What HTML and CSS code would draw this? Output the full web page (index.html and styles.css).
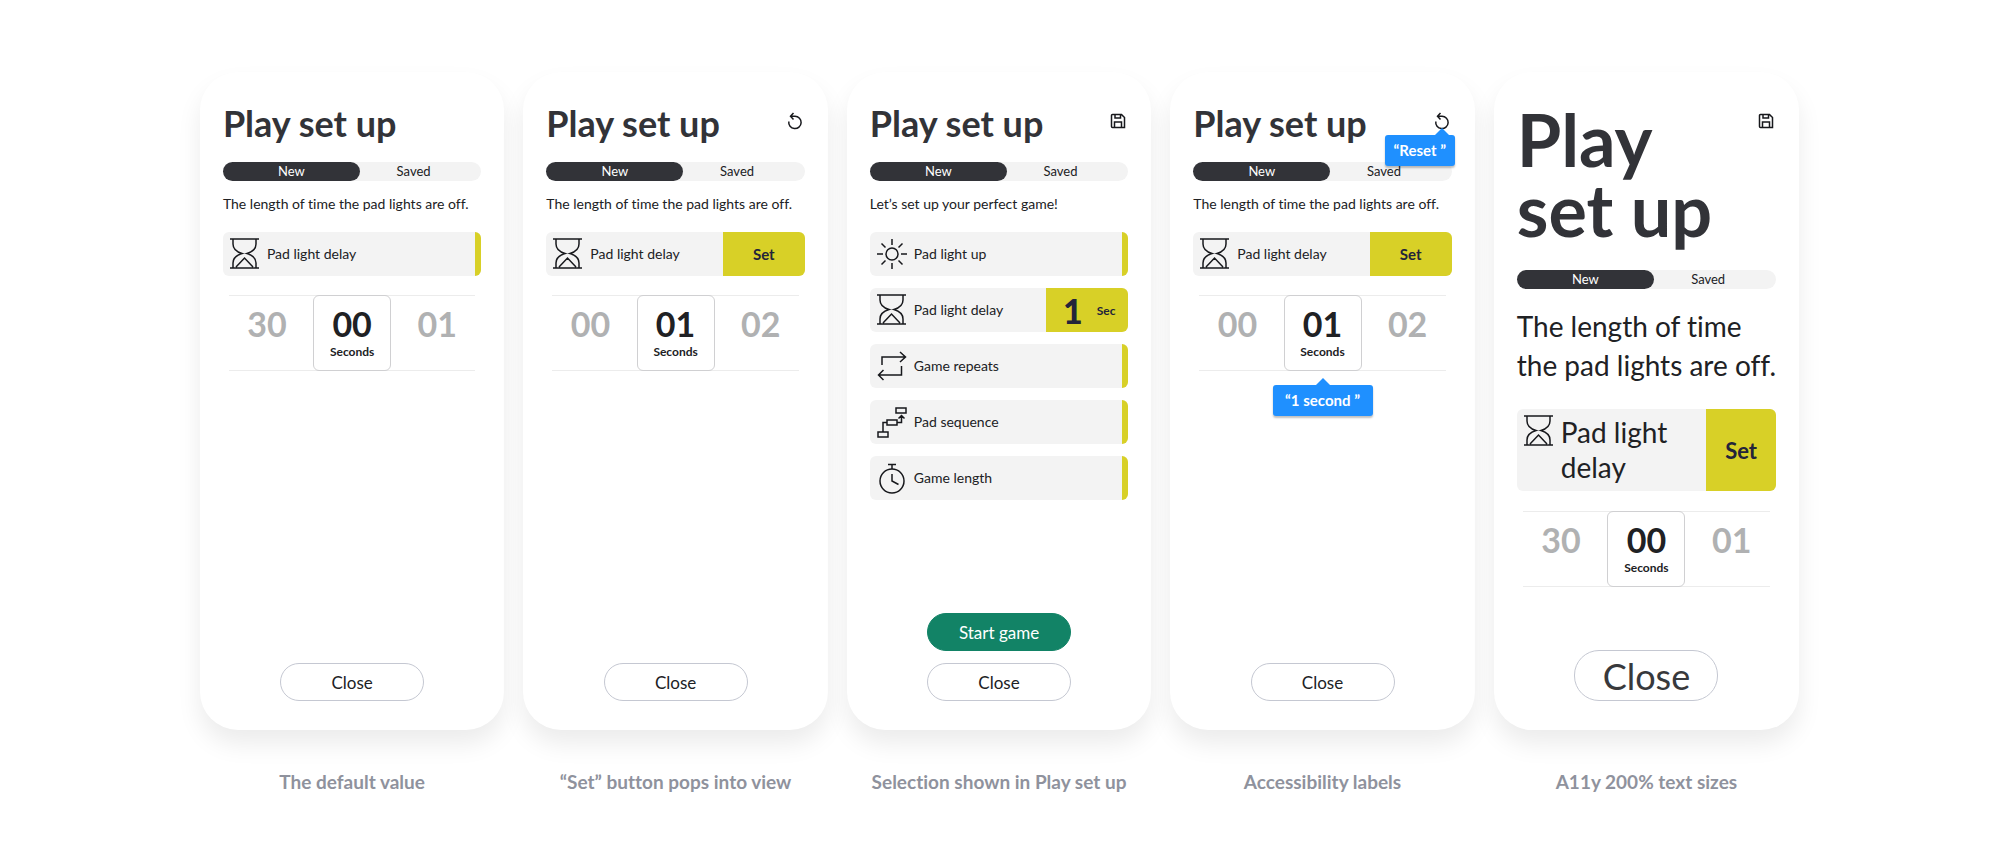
FILE: index.html
```html
<!DOCTYPE html>
<html lang="en">
<head>
    <meta charset="UTF-8">
    <meta name="viewport" content="width=device-width, initial-scale=1.0">
    <title>Play set up</title>
    <link rel="stylesheet" href="styles.css">
</head>
<body>
    <!-- Shared icons -->
    <svg class="sprite" aria-hidden="true">
        <symbol id="hourglass" viewBox="0 0 30 32">
            <path d="M0 1H29M0 30H29M3 1V6C3 11 7 14 12 15.500C7 17 3 20 3 25V30M26 1V6C26 11 22 14 17 15.500C22 17 26 20 26 25V30M6 29L14.500 20L23 29"/>
        </symbol>
        <symbol id="sun" viewBox="0 0 30 32">
            <circle cx="15" cy="16" r="6"/>
            <path d="M15 1V7M15 25V31M0 16H6M24 16H30M4.500 5.500L8.500 9.500M21.500 22.500L25.500 26.500M25.500 5.500L21.500 9.500M8.500 22.500L4.500 26.500"/>
        </symbol>
        <symbol id="repeat" viewBox="0 0 30 32">
            <path d="M5 15V7H28M23 2L28.500 7L23 12M24.500 16V25H2M6.500 20L1.500 25L6.500 30"/>
        </symbol>
        <symbol id="sequence" viewBox="0 0 30 32">
            <path d="M1 26H11V31H1ZM10 14H20V19H10ZM19 2H29V7H19ZM6 26V16.500H10M20 16.500H24.500V10M21.500 12.500L24.500 9.500L27.500 12.500"/>
        </symbol>
        <symbol id="stopwatch" viewBox="0 0 30 32">
            <circle cx="15" cy="19" r="12"/>
            <path d="M15 7V2.500M11 2.500H19M15 12V19L21.500 22.500"/>
        </symbol>
        <symbol id="reset" viewBox="0 0 16 18">
            <path d="M1.800 9.500A6.200 6.200 0 1 0 8 4.200H4M6.500 1L3.500 4.200L6.500 7.400"/>
        </symbol>
        <symbol id="save" viewBox="0 0 16 18">
            <path d="M2.500 2.500H11.500L14.500 5.500V15.500H2.500A1 1 0 0 1 1.500 14.500V3.500A1 1 0 0 1 2.500 2.500ZM4.500 15.500V10H11.500V15.500M5 2.500V6H10.500V2.500"/>
        </symbol>
    </svg>

    <main class="screens">
        <figure class="screen">
            <section class="card">
                <header class="card-header">
                    <h2>Play set up</h2>
                </header>
                <div class="tabs">
                    <button class="tab active">New</button>
                    <button class="tab">Saved</button>
                </div>
                <p class="description">The length of time the pad lights are off.</p>
                <div class="option">
                    <svg class="option-icon"><use href="#hourglass"/></svg>
                    <span class="option-label">Pad light delay</span>
                    <span class="option-edge"></span>
                </div>
                <div class="picker">
                    <button class="number">30</button>
                    <div class="selected"><span class="number">00</span><span class="unit">Seconds</span></div>
                    <button class="number">01</button>
                </div>
                <footer class="actions">
                    <button class="pill">Close</button>
                </footer>
            </section>
            <figcaption>The default value</figcaption>
        </figure>

        <figure class="screen">
            <section class="card">
                <header class="card-header">
                    <h2>Play set up</h2>
                    <button class="icon-button" aria-label="Reset"><svg><use href="#reset"/></svg></button>
                </header>
                <div class="tabs">
                    <button class="tab active">New</button>
                    <button class="tab">Saved</button>
                </div>
                <p class="description">The length of time the pad lights are off.</p>
                <div class="option">
                    <svg class="option-icon"><use href="#hourglass"/></svg>
                    <span class="option-label">Pad light delay</span>
                    <button class="option-set">Set</button>
                </div>
                <div class="picker">
                    <button class="number">00</button>
                    <div class="selected"><span class="number">01</span><span class="unit">Seconds</span></div>
                    <button class="number">02</button>
                </div>
                <footer class="actions">
                    <button class="pill">Close</button>
                </footer>
            </section>
            <figcaption>“Set” button pops into view</figcaption>
        </figure>

        <figure class="screen">
            <section class="card">
                <header class="card-header">
                    <h2>Play set up</h2>
                    <button class="icon-button" aria-label="Save"><svg><use href="#save"/></svg></button>
                </header>
                <div class="tabs">
                    <button class="tab active">New</button>
                    <button class="tab">Saved</button>
                </div>
                <p class="description">Let’s set up your perfect game!</p>
                <div class="options">
                    <button class="option">
                        <svg class="option-icon"><use href="#sun"/></svg>
                        <span class="option-label">Pad light up</span>
                        <span class="option-edge"></span>
                    </button>
                    <button class="option">
                        <svg class="option-icon"><use href="#hourglass"/></svg>
                        <span class="option-label">Pad light delay</span>
                        <span class="option-set option-value"><b>1</b><small>Sec</small></span>
                    </button>
                    <button class="option">
                        <svg class="option-icon"><use href="#repeat"/></svg>
                        <span class="option-label">Game repeats</span>
                        <span class="option-edge"></span>
                    </button>
                    <button class="option">
                        <svg class="option-icon"><use href="#sequence"/></svg>
                        <span class="option-label">Pad sequence</span>
                        <span class="option-edge"></span>
                    </button>
                    <button class="option">
                        <svg class="option-icon"><use href="#stopwatch"/></svg>
                        <span class="option-label">Game length</span>
                        <span class="option-edge"></span>
                    </button>
                </div>
                <footer class="actions">
                    <button class="pill primary">Start game</button>
                    <button class="pill">Close</button>
                </footer>
            </section>
            <figcaption>Selection shown in Play set up</figcaption>
        </figure>

        <figure class="screen">
            <section class="card">
                <header class="card-header">
                    <h2>Play set up</h2>
                    <button class="icon-button" aria-label="Reset"><svg><use href="#reset"/></svg></button>
                    <span class="tooltip tooltip-reset" role="tooltip">“Reset ”</span>
                </header>
                <div class="tabs">
                    <button class="tab active">New</button>
                    <button class="tab">Saved</button>
                </div>
                <p class="description">The length of time the pad lights are off.</p>
                <div class="option">
                    <svg class="option-icon"><use href="#hourglass"/></svg>
                    <span class="option-label">Pad light delay</span>
                    <button class="option-set">Set</button>
                </div>
                <div class="picker">
                    <button class="number">00</button>
                    <div class="selected"><span class="number">01</span><span class="unit">Seconds</span></div>
                    <button class="number">02</button>
                    <span class="tooltip tooltip-second" role="tooltip">“1 second ”</span>
                </div>
                <footer class="actions">
                    <button class="pill">Close</button>
                </footer>
            </section>
            <figcaption>Accessibility labels</figcaption>
        </figure>

        <figure class="screen">
            <section class="card large-text">
                <header class="card-header">
                    <h2>Play <br>set up</h2>
                    <button class="icon-button" aria-label="Save"><svg><use href="#save"/></svg></button>
                </header>
                <div class="tabs">
                    <button class="tab active">New</button>
                    <button class="tab">Saved</button>
                </div>
                <p class="description">The length of time <br>the pad lights are off.</p>
                <div class="option">
                    <svg class="option-icon"><use href="#hourglass"/></svg>
                    <span class="option-label">Pad light delay</span>
                    <button class="option-set">Set</button>
                </div>
                <div class="picker">
                    <button class="number">30</button>
                    <div class="selected"><span class="number">00</span><span class="unit">Seconds</span></div>
                    <button class="number">01</button>
                </div>
                <footer class="actions">
                    <button class="pill">Close</button>
                </footer>
            </section>
            <figcaption>A11y 200% text sizes</figcaption>
        </figure>
    </main>
</body>
</html>
```
FILE: styles.css
```css
*{
    box-sizing: border-box;
}

body{
    margin: 0;
    background-color: white;
    color: #202124;
    font-family: Lato, "Open Sans", sans-serif;
    font-size: 14px;
    font-variant-ligatures: none;
}

button{
    margin: 0;
    padding: 0;
    border: none;
    background: none;
    color: inherit;
    font: inherit;
    font-variant-ligatures: none;
    cursor: pointer;
}

svg{
    fill: none;
    stroke: #17181c;
    stroke-width: 1.5;
}

.sprite{
    display: none;
}

.screens{
    display: grid;
    grid-template-columns: repeat(5, 1fr);
    gap: 19px;
    padding: 72px 10% 0;
}

.screen{
    margin: 0;
}

.card{
    display: flex;
    flex-direction: column;
    min-height: calc(100vh - 200px);
    padding: 28px 23px 29px;
    border-radius: 38px;
    background-color: white;
    box-shadow: 0 14px 24px rgba(0, 0, 0, 0.08);
}

figcaption{
    margin-top: 40px;
    color: #8f929d;
    font-size: 19px;
    font-weight: bold;
    line-height: 24px;
    text-align: center;
}

/* Title row */
.card-header{
    display: flex;
    justify-content: space-between;
    align-items: flex-start;
    position: relative;
    margin-bottom: 16px;
}

h2{
    margin: 0;
    color: #323338;
    font-size: 36px;
    font-weight: bold;
    line-height: 46px;
}

.icon-button{
    width: 16px;
    height: 18px;
    margin: 12px 2px 0 0;
}

.icon-button svg{
    display: block;
    width: 16px;
    height: 18px;
}

/* New / Saved */
.tabs{
    display: flex;
    border-radius: 10px;
    background-color: #f3f3f3;
}

.tab{
    flex: 1;
    height: 19px;
    padding-right: 14px;
    border-radius: 10px;
    font-size: 13px;
    line-height: 19px;
}

.tab.active{
    flex: 0 0 53%;
    padding-right: 0;
    background-color: #323338;
    color: white;
}

.description{
    margin: 13px 0 18px;
    font-size: 14px;
    line-height: 20px;
}

/* Option rows */
.options{
    display: flex;
    flex-direction: column;
    gap: 12px;
}

.option{
    display: flex;
    width: 100%;
    min-height: 44px;
    padding-left: 7px;
    border-radius: 6px;
    background-color: #f3f3f3;
    overflow: hidden;
    text-align: left;
}

.option-icon{
    flex: none;
    width: 30px;
    height: 32px;
    margin: 6px 7px 0 0;
}

.option-label{
    flex: 1;
    align-self: center;
    padding-bottom: 2px;
    font-size: 14px;
}

.option-edge{
    align-self: stretch;
    width: 6px;
    background-color: #d8d027;
}

.option-set{
    display: flex;
    justify-content: center;
    align-items: center;
    align-self: stretch;
    width: 82px;
    background-color: #d8d027;
    color: #23243a;
    font-size: 15px;
    font-weight: bold;
}

.option-value{
    gap: 14px;
    padding-left: 4px;
}

.option-value b{
    font-size: 34px;
}

.option-value small{
    font-size: 12px;
}

/* Seconds picker */
.picker{
    display: flex;
    position: relative;
    height: 76px;
    margin: 19px 6px 0;
    border-top: 1px solid #ececec;
    border-bottom: 1px solid #ececec;
}

.number{
    flex: 1;
    align-self: flex-start;
    margin-top: 8px;
    color: #b0b1b2;
    font-size: 34px;
    font-weight: bold;
    line-height: 40px;
}

.number:first-child{
    padding-right: 8px;
}

.selected + .number{
    padding-left: 8px;
}

.selected{
    display: flex;
    flex-direction: column;
    align-items: center;
    width: 78px;
    margin: -1px 0;
    border: 1px solid #d0d0d2;
    border-radius: 6px;
}

.selected .number{
    flex: none;
    align-self: center;
    padding: 0;
    color: #202124;
}

.unit{
    font-size: 12px;
    font-weight: bold;
    line-height: 16px;
}

/* Spoken labels */
.tooltip{
    position: absolute;
    height: 31px;
    border-radius: 3px;
    background-color: #1f90ff;
    box-shadow: 0 2px 2px rgba(0, 0, 0, 0.25);
    color: white;
    font-size: 15px;
    font-weight: bold;
    line-height: 31px;
    text-align: center;
}

.tooltip::before{
    content: "";
    position: absolute;
    top: -7px;
    left: calc(50% - 7px);
    border: solid transparent;
    border-width: 0 7px 7px;
    border-bottom-color: #1f90ff;
}

.tooltip-reset{
    top: 35px;
    right: -3px;
    width: 70px;
}

.tooltip-reset::before{
    left: auto;
    right: 6px;
}

.tooltip-second{
    top: 89px;
    left: calc(50% - 50px);
    width: 100px;
}

/* Bottom buttons */
.actions{
    display: flex;
    flex-direction: column;
    align-items: center;
    gap: 12px;
    margin-top: auto;
}

.pill{
    width: 144px;
    height: 38px;
    border: 1px solid #c5c8d2;
    border-radius: 25px;
    font-size: 17px;
}

.pill.primary{
    border-color: #128366;
    background-color: #128366;
    color: white;
}

/* 200% text */
.large-text h2{
    padding-top: 4px;
    font-size: 72px;
    line-height: 70px;
}

.large-text .card-header{
    margin-bottom: 26px;
}

.large-text .description{
    margin: 18px 0 24px;
    font-size: 28px;
    line-height: 39px;
    white-space: nowrap;
}

.large-text .option-label{
    padding: 6px 0;
    font-size: 28px;
    line-height: 35px;
}

.large-text .option-set{
    width: 70px;
    font-size: 22px;
}

.large-text .picker{
    margin-top: 20px;
}

.large-text .pill{
    height: 51px;
    color: #38393c;
    font-size: 36px;
}
```
